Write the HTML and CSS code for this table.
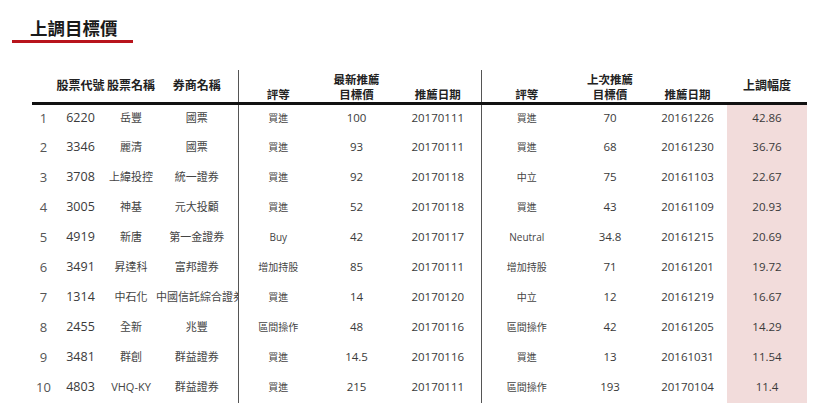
FILE: index.html
```html
<!DOCTYPE html>
<html lang="zh-Hant">
<head>
<meta charset="utf-8">
<link rel="stylesheet" href="styles.css">
</head>
<body>
<div class="title-wrap"><h1 class="title">上調目標價</h1></div>
<table class="grid">
  <colgroup>
    <col class="c-no"><col class="c-code"><col class="c-name"><col class="c-broker">
    <col class="c-rate"><col class="c-price"><col class="c-date">
    <col class="c-rate2"><col class="c-price2"><col class="c-date2"><col class="c-up">
  </colgroup>
  <thead>
    <tr>
      <th class="mid"></th>
      <th class="mid">股票代號</th>
      <th class="mid">股票名稱</th>
      <th class="mid">券商名稱</th>
      <th class="sep">評等</th>
      <th>最新推薦<br>目標價</th>
      <th>推薦日期</th>
      <th class="sep">評等</th>
      <th>上次推薦<br>目標價</th>
      <th>推薦日期</th>
      <th class="mid">上調幅度</th>
    </tr>
  </thead>
  <tbody>
    <tr><td class="no">1</td><td class="code">6220</td><td class="name">岳豐</td><td class="name">國票</td><td class="sep rate">買進</td><td class="num">100</td><td class="num">20170111</td><td class="sep rate">買進</td><td class="num">70</td><td class="num">20161226</td><td class="num up">42.86</td></tr>
    <tr><td class="no">2</td><td class="code">3346</td><td class="name">麗清</td><td class="name">國票</td><td class="sep rate">買進</td><td class="num">93</td><td class="num">20170111</td><td class="sep rate">買進</td><td class="num">68</td><td class="num">20161230</td><td class="num up">36.76</td></tr>
    <tr><td class="no">3</td><td class="code">3708</td><td class="name">上緯投控</td><td class="name">統一證券</td><td class="sep rate">買進</td><td class="num">92</td><td class="num">20170118</td><td class="sep rate">中立</td><td class="num">75</td><td class="num">20161103</td><td class="num up">22.67</td></tr>
    <tr><td class="no">4</td><td class="code">3005</td><td class="name">神基</td><td class="name">元大投顧</td><td class="sep rate">買進</td><td class="num">52</td><td class="num">20170118</td><td class="sep rate">買進</td><td class="num">43</td><td class="num">20161109</td><td class="num up">20.93</td></tr>
    <tr><td class="no">5</td><td class="code">4919</td><td class="name">新唐</td><td class="name">第一金證券</td><td class="sep rate">Buy</td><td class="num">42</td><td class="num">20170117</td><td class="sep rate">Neutral</td><td class="num">34.8</td><td class="num">20161215</td><td class="num up">20.69</td></tr>
    <tr><td class="no">6</td><td class="code">3491</td><td class="name">昇達科</td><td class="name">富邦證券</td><td class="sep rate">增加持股</td><td class="num">85</td><td class="num">20170111</td><td class="sep rate">增加持股</td><td class="num">71</td><td class="num">20161201</td><td class="num up">19.72</td></tr>
    <tr><td class="no">7</td><td class="code">1314</td><td class="name">中石化</td><td class="name">中國信託綜合證券</td><td class="sep rate">買進</td><td class="num">14</td><td class="num">20170120</td><td class="sep rate">中立</td><td class="num">12</td><td class="num">20161219</td><td class="num up">16.67</td></tr>
    <tr><td class="no">8</td><td class="code">2455</td><td class="name">全新</td><td class="name">兆豐</td><td class="sep rate">區間操作</td><td class="num">48</td><td class="num">20170116</td><td class="sep rate">區間操作</td><td class="num">42</td><td class="num">20161205</td><td class="num up">14.29</td></tr>
    <tr><td class="no">9</td><td class="code">3481</td><td class="name">群創</td><td class="name">群益證券</td><td class="sep rate">買進</td><td class="num">14.5</td><td class="num">20170116</td><td class="sep rate">買進</td><td class="num">13</td><td class="num">20161031</td><td class="num up">11.54</td></tr>
    <tr><td class="no">10</td><td class="code">4803</td><td class="name">VHQ-KY</td><td class="name">群益證券</td><td class="sep rate">買進</td><td class="num">215</td><td class="num">20170111</td><td class="sep rate">區間操作</td><td class="num">193</td><td class="num">20170104</td><td class="num up">11.4</td></tr>
  </tbody>
</table>
</body>
</html>
```

FILE: styles.css
```css
html, body {
  margin: 0;
  padding: 0;
  background: #ffffff;
}
body {
  font-family: "Open Sans", "Noto Sans CJK TC", sans-serif;
  color: #3a3a3a;
  width: 820px;
  height: 411px;
  overflow: hidden;
}
.title-wrap {
  padding-left: 12px;
  padding-top: 15px;
}
.title {
  margin: 0;
  width: 103px;
  padding-left: 18px;
  font-family: "Noto Sans CJK TC", sans-serif;
  font-size: 17.5px;
  font-weight: 700;
  line-height: 25px;
  color: #1a1a1a;
  border-bottom: 3px solid #b8141c;
}
.grid {
  margin-top: 27px;
  margin-left: 32px;
  border-collapse: collapse;
  table-layout: fixed;
  width: 775px;
}
.c-no { width: 23px; }
.c-code { width: 51px; }
.c-name { width: 50px; }
.c-broker { width: 82px; }
.c-rate { width: 80px; }
.c-price { width: 77px; }
.c-date { width: 86px; }
.c-rate2 { width: 91px; }
.c-price2 { width: 76px; }
.c-date2 { width: 79px; }
.c-up { width: 80px; }

.grid th {
  height: 30px;
  padding: 0 0 1px;
  font-family: "Noto Sans CJK TC", sans-serif;
  font-size: 11.5px;
  font-weight: 700;
  line-height: 14.5px;
  color: #222;
  text-align: center;
  vertical-align: bottom;
  border-bottom: 3px solid #111;
  white-space: nowrap;
}
.grid th.mid {
  vertical-align: middle;
  padding-bottom: 2px;
  font-size: 12px;
}
.grid td {
  height: 28px;
  padding: 0 0 2px;
  text-align: center;
  vertical-align: middle;
  white-space: nowrap;
  overflow: hidden;
  font-size: 11.5px;
  line-height: 14px;
}
.grid tbody tr:first-child td {
  height: 26px;
}
.grid .sep {
  border-left: 1px solid #555;
}
.grid td.no {
  font-size: 13px;
  color: #555;
}
.grid td.code {
  font-size: 12.5px;
}
.grid td.name {
  font-size: 11px;
  color: #444;
}
.grid td.rate {
  font-size: 10px;
  color: #444;
}
.grid td.num {
  font-size: 11.5px;
}
.grid td.up {
  background: #f2dcdb;
}
```
